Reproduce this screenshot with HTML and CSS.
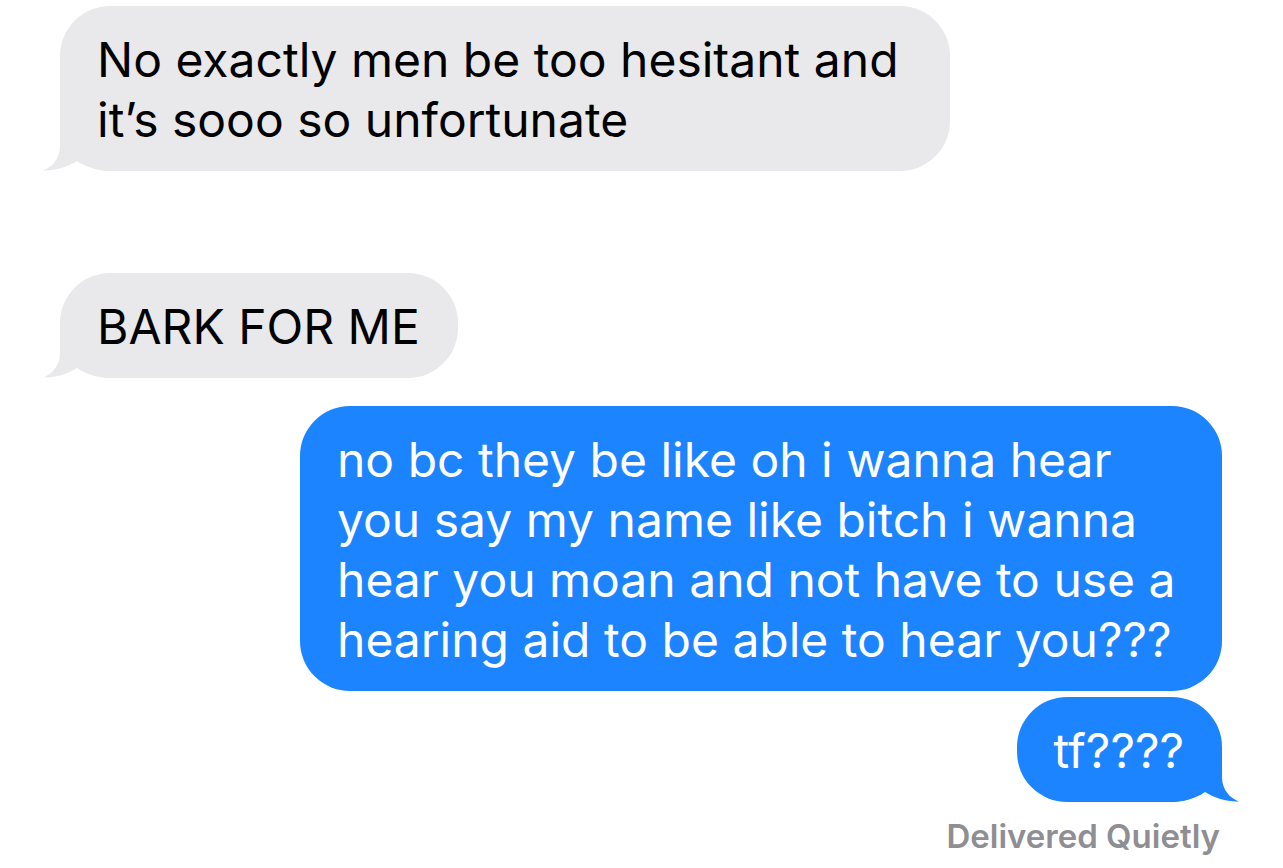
FILE: index.html
```html
<!DOCTYPE html>
<html lang="en">
<head>
<meta charset="utf-8">
<title>Messages</title>
<link rel="stylesheet" href="styles.css">
</head>
<body>
<main class="thread">
  <div class="msg msg--in msg--first">
    <div class="bubble bubble--in bubble--w890">No exactly men be too hesitant and<br>it’s sooo so unfortunate
      <svg class="tail tail--in" viewBox="0 0 70 50" aria-hidden="true"><path d="M17 0 L17 25 C17 38 9 46 0 49.5 C12 50 24 46 34 40 C42 46 55 50 70 50 L70 0 Z"/></svg>
    </div>
  </div>
  <div class="msg msg--in msg--gap">
    <div class="bubble bubble--in">BARK FOR ME
      <svg class="tail tail--in" viewBox="0 0 70 50" aria-hidden="true"><path d="M17 0 L17 25 C17 38 9 46 0 49.5 C12 50 24 46 34 40 C42 46 55 50 70 50 L70 0 Z"/></svg>
    </div>
  </div>
  <div class="msg msg--out msg--near">
    <div class="bubble bubble--out bubble--w922">no bc they be like oh i wanna hear<br>you say my name like bitch i wanna<br>hear you moan and not have to use a<br>hearing aid to be able to hear you???</div>
  </div>
  <div class="msg msg--out msg--tight">
    <div class="bubble bubble--out">tf????
      <svg class="tail tail--out" viewBox="0 0 70 50" aria-hidden="true"><path d="M53 0 L53 25 C53 38 61 46 70 49.5 C58 50 46 46 36 40 C28 46 15 50 0 50 L0 0 Z"/></svg>
    </div>
  </div>
  <div class="status">Delivered Quietly</div>
</main>
</body>
</html>
```
FILE: styles.css
```css
* { box-sizing: border-box; }
html, body {
  margin: 0;
  padding: 0;
  background: #ffffff;
}
body {
  font-family: Inter, "Noto Sans", "Liberation Sans", sans-serif;
  -webkit-font-smoothing: antialiased;
}
.thread {
  display: flex;
  flex-direction: column;
  padding: 6px 61px 0 60px;
}
.msg {
  display: flex;
}
.msg--in { justify-content: flex-start; }
.msg--out { justify-content: flex-end; }
.msg--gap { margin-top: 102px; }
.msg--near { margin-top: 28px; }
.msg--tight { margin-top: 6px; }

.bubble {
  position: relative;
  isolation: isolate;
  font-size: 48px;
  line-height: 60px;
  letter-spacing: 0;
  padding: 24px 38px 21px 37px;
  border-radius: 50px;
  white-space: nowrap;
}
.bubble--in {
  background: #e9e9eb;
  color: #000000;
}
.bubble--out {
  background: #1b84fe;
  color: #ffffff;
}
.bubble--w890 { width: 890px; }
.bubble--w922 { width: 922px; }

.tail {
  position: absolute;
  z-index: -1;
  bottom: 0;
  width: 70px;
  height: 50px;
}
.tail--in {
  left: -17px;
  fill: #e9e9eb;
}
.tail--out {
  right: -17px;
  fill: #1b84fe;
}

.status {
  align-self: flex-end;
  margin-top: 14px;
  margin-right: 2px;
  font-size: 33px;
  line-height: 40px;
  font-weight: 600;
  color: #8e8e93;
}
```
